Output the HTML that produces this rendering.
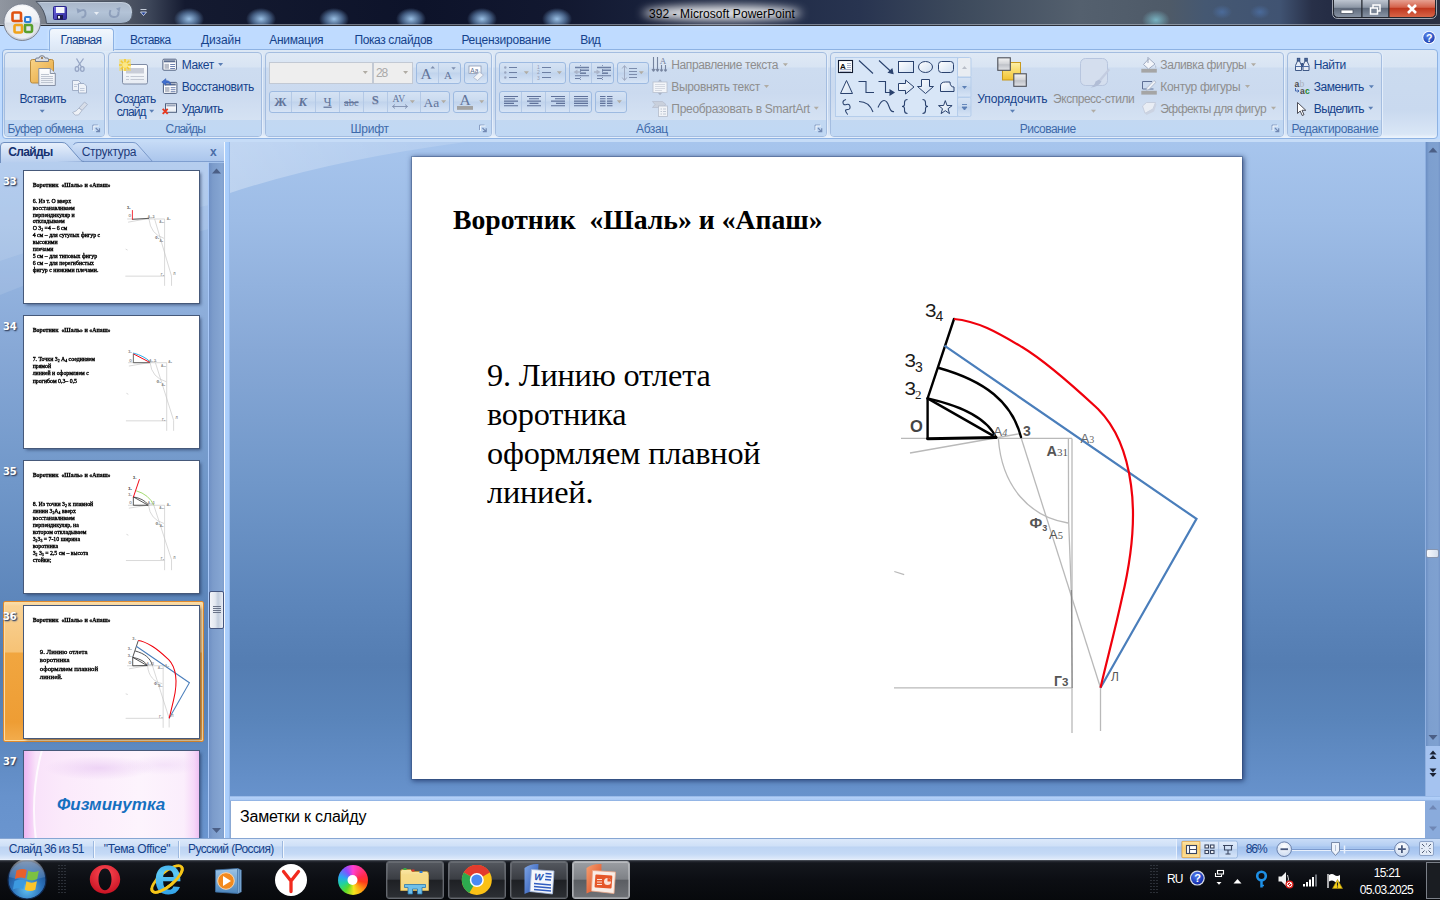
<!DOCTYPE html>
<html lang="ru"><head><meta charset="utf-8"><title>392 - Microsoft PowerPoint</title>
<style>
*{box-sizing:border-box;margin:0;padding:0}
html,body{width:1440px;height:900px;overflow:hidden}
body{position:relative;font-family:"Liberation Sans",sans-serif;font-size:12px;color:#15428b;background:#6b93c9}
.a{position:absolute}
.t{position:absolute;white-space:nowrap;line-height:14px}
#titlebar{left:0;top:0;width:1440px;height:26px;box-shadow:inset 0 -1px 0 #2c303a,inset 0 -2px 0 rgba(190,196,206,.55);background:radial-gradient(ellipse 15px 11px at 189px 19px,rgba(160,200,238,.95),rgba(120,165,215,.5) 60%,rgba(100,140,190,0) 100%),radial-gradient(ellipse 15px 11px at 261px 19px,rgba(160,200,238,.95),rgba(120,165,215,.5) 60%,rgba(100,140,190,0) 100%),radial-gradient(ellipse 15px 11px at 334px 19px,rgba(160,200,238,.95),rgba(120,165,215,.5) 60%,rgba(100,140,190,0) 100%),radial-gradient(ellipse 15px 11px at 411px 19px,rgba(160,200,238,.95),rgba(120,165,215,.5) 60%,rgba(100,140,190,0) 100%),radial-gradient(ellipse 15px 11px at 482px 19px,rgba(160,200,238,.95),rgba(120,165,215,.5) 60%,rgba(100,140,190,0) 100%),radial-gradient(ellipse 15px 11px at 557px 19px,rgba(160,200,238,.95),rgba(120,165,215,.5) 60%,rgba(100,140,190,0) 100%),radial-gradient(ellipse 14px 10px at 1156px 20px,rgba(130,200,215,.8),rgba(100,160,180,0) 100%),radial-gradient(ellipse 10px 7px at 1222px 12px,rgba(80,120,180,.6),rgba(80,120,180,0) 100%),radial-gradient(ellipse 10px 7px at 1260px 12px,rgba(80,120,180,.6),rgba(80,120,180,0) 100%),linear-gradient(90deg,#9096a0 0,#7c828c 40px,#5a606c 110px,#3c4558 150px,#141a30 185px,#0d132a 420px,#121830 560px,#1b2540 700px,#283450 860px,#3d4a5c 960px,#54606e 1080px,#4e5a68 1170px,#455872 1205px,#405372 1280px,#283048 1312px,#222a42 1345px,#2a3042 1440px)}
#tabrow{left:0;top:26px;width:1440px;height:116px;background:#bfdbff}
#ribbon{left:2px;top:49px;width:1436px;height:90px;border:1px solid #8db2e3;border-radius:4px;background:linear-gradient(#dde8f5 0,#d8e4f3 17px,#cbdbef 18px,#c9d9ef 60px,#d9e6f6 84px,#eef5fd 88px)}
.grp{position:absolute;top:52px;height:85px;border:1px solid #a9c2e2;border-radius:4px;background:linear-gradient(#dee8f5 0,#d2e0f2 17px,#c8d8ed 18px,#c9daee 68px,#c2d8f1 69px,#c1d9f3 100%);box-shadow:1px 1px 0 #e8f1fc}
.grp .lbl{position:absolute;left:0;right:0;bottom:0;height:16px;text-align:center;line-height:15px;color:#3e6aaa;font-size:12px}
.dis{color:#8e9aab}
#below{left:0;top:139px;width:1440px;height:3px;background:#c6dcf7}
#leftpane{left:0;top:142px;width:224px;height:696px;background:linear-gradient(#a7c5ed 0,#9dbce6 11%,#87a8d6 30%,#7097c9 49%,#5d86bb 66%,#547db2 75%,#5984ba 83%,#6792cc 94%,#6a95cf 100%)}
#split{left:224px;top:142px;width:6px;height:696px;background:linear-gradient(90deg,#f4f8fe 0,#f4f8fe 1px,#acd0fc 1px,#a8ccfb 5px,#86a8d8 6px)}
#work{left:230px;top:142px;width:1195px;height:654px;background:linear-gradient(#a7c5ed 0,#9dbce6 12%,#87a8d6 32%,#7097c9 52%,#5d86bb 70%,#547db2 80%,#5984ba 88%,#6792cc 100%);overflow:hidden}
#slide{left:412px;top:157px;width:830px;height:622px;background:#fff;box-shadow:1px 1px 5px 1px rgba(25,45,95,.75),0 0 0 1px rgba(60,85,130,.35)}
.grp{position:absolute;top:52px;height:85px;border:1px solid #a4bde0;border-radius:4px;background:linear-gradient(#dfe9f5 0,#d8e4f3 14px,#cddcf0 15px,#cbdaef 40px,#d5e2f3 68px);box-shadow:1px 0 0 #e4eefb,0 1px 0 #e4eefb;overflow:hidden}
.lblband{position:absolute;left:0;right:0;bottom:0;height:16px;background:linear-gradient(#c2d8f2,#c0d8f4)}
#acttab{left:49px;top:28px;width:65px;height:23px;border:1px solid #8db2e3;border-bottom:none;border-radius:4px 4px 0 0;background:linear-gradient(#f2f7fd,#e3edfa 60%,#dbe6f4);box-shadow:0 0 3px #e0f0ff}
#lphead{left:0;top:142px;width:224px;height:20px;background:linear-gradient(#c5daf6,#abc6ec);border-bottom:1px solid #7f9fd0}
.thumb{position:absolute;left:24px;width:175px;height:132px;background:#fff;overflow:hidden;box-shadow:0 0 0 1px #46597a,2px 2px 3px rgba(20,35,70,.55)}
.mini{position:absolute;left:0;top:0;width:830px;height:622px;transform:scale(.2108);transform-origin:0 0;font-family:"Liberation Serif",serif;color:#000}
.mini .ti{-webkit-text-stroke:1.2px #000;position:absolute;left:41px;top:51px;font:bold 27.7px/32px "Liberation Serif",serif;white-space:pre}
.mini .bo{-webkit-text-stroke:1.6px #000;position:absolute;left:41px;font:27.7px/33px "Liberation Serif",serif;white-space:nowrap}
.mini sub{font-size:18px;line-height:0;vertical-align:-5px}
.num{position:absolute;left:3px;width:20px;font:bold 10px/14px "DejaVu Sans","Liberation Sans",sans-serif;letter-spacing:-.15px;color:#fff;text-shadow:1px 1px 1px #3a4966,1px 1px 2px #55688a}
#lpscroll{left:208px;top:163px;width:16px;height:675px;background:linear-gradient(90deg,#a8c8f8 0,#a8c8f8 1px,#6f90c4 1px,#7c9ccb 5px,#86a6d3 14px,#7c9ccc 16px)}
#lpthumb{left:209px;top:591px;width:15px;height:38px;border:1px solid #45567f;border-radius:2px;background:linear-gradient(90deg,#f3f5f9 0,#e3e8f0 40%,#c3cedd 62%,#e9edf4 100%)}
#sel{left:3px;top:601px;width:201px;height:141px;border:1px solid #e18a2b;border-radius:2px;background:linear-gradient(#fbe0b0 0,#f9d295 4px,#f6c275 50px,#f1a640 51px,#ee9d34 120px,#f3ae50 141px);box-shadow:inset 0 0 0 1px #fbdca4}
#nsplit{left:230px;top:796px;width:1210px;height:5px;background:linear-gradient(#8fb1e2,#b1cff8 30%,#a9c9f5 80%,#7fa2d6)}
#notes{left:230px;top:801px;width:1195px;height:37px;background:#fff;border-left:1px solid #8ba9d4}
#nscroll{left:1425px;top:801px;width:15px;height:37px;background:#8aabdc}
#status{left:0;top:838px;width:1440px;height:22px;border-top:1px solid #86a6d3;background:linear-gradient(#dce9fa 0,#cfe0f7 7px,#bdd4f3 8px,#c5daf6 15px,#dde9fa 20px,#eef4fc 21px)}
#statusr{left:1176px;top:839px;width:264px;height:21px;background:linear-gradient(#c9dcf7 0,#b4cef2 7px,#a3c2ee 8px,#b0cbf2 15px,#cfe0f8 20px,#e6effb 21px);border-left:1px solid #e8f0fc}
.ssep{position:absolute;top:841px;width:2px;height:17px;background:linear-gradient(90deg,#9db9e0 50%,#f2f7fd 50%)}
#taskbar{left:0;top:860px;width:1440px;height:40px;background:linear-gradient(#5d636c 0,#2a2e36 1px,#14171d 3px,#0c0e13 20px,#07090c 100%)}
.tbtn{position:absolute;top:861px;height:38px;border:1px solid #63676e;border-radius:3px;background:linear-gradient(#54585f 0,#3a3d43 48%,#1e2024 50%,#2c2f34 100%);box-shadow:inset 0 0 0 1px rgba(255,255,255,.12)}
.tbtn.act{border-color:#a8abb0;background:linear-gradient(#9b9ea3 0,#7e8186 48%,#5a5d62 50%,#6f7277 100%);box-shadow:inset 0 0 0 1px rgba(255,255,255,.3)}
#rainbow{left:337.5px;top:865px;width:30px;height:30px;border-radius:50%;background:conic-gradient(from 0deg,#ff3fd0,#ff2a4a 70deg,#ff3a1a 100deg,#ffa014 140deg,#f6e51c 175deg,#58da2a 215deg,#1fd2a0 250deg,#2aa6f4 285deg,#8a4cff 325deg,#ff3fd0 360deg);filter:blur(.4px)}
</style></head><body>
<div id="titlebar" class="a"></div>
<div id="tabrow" class="a"></div>
<div id="ribbon" class="a"></div>
<div id="below" class="a"></div>
<div id="leftpane" class="a"><svg id="lphl" width="209" height="160" viewBox="0 162 209 160" style="position:absolute;left:0;top:20px"><path d="M0 162H209V205Q90 230 0 261Z" fill="#fff" opacity=".1"/><path d="M0 162H209V229Q90 258 0 295Z" fill="#fff" opacity=".1"/></svg></div>
<div id="split" class="a"></div>
<div id="work" class="a"><svg width="1195" height="654" viewBox="230 142 1195 654" style="position:absolute;left:0;top:0"><defs><linearGradient id="hlg" x1="0" y1="0" x2="1" y2="0"><stop offset="0" stop-color="#fff" stop-opacity=".3"/><stop offset="1" stop-color="#fff" stop-opacity=".12"/></linearGradient></defs><path id="hl" d="M230 142H466Q330 160 230 193Z" fill="url(#hlg)"/></svg></div>
<div class="grp" style="left:4px;width:101px"><div class="lblband"></div></div><div class="grp" style="left:108px;width:154px"><div class="lblband"></div></div><div class="grp" style="left:265px;width:227px"><div class="lblband"></div></div><div class="grp" style="left:495px;width:332px"><div class="lblband"></div></div><div class="grp" style="left:830px;width:454px"><div class="lblband"></div></div><div class="grp" style="left:1287px;width:95px"><div class="lblband"></div></div>
<div id="acttab" class="a"></div>
<svg class="a" style="left:0;top:50px" width="500" height="90" viewBox="0 50 500 90">
<defs>
<linearGradient id="gclip" x1="0" y1="0" x2="1" y2="1"><stop offset="0" stop-color="#f9d488"/><stop offset="1" stop-color="#e5a53c"/></linearGradient>
<linearGradient id="gpaper" x1="0" y1="0" x2="0" y2="1"><stop offset="0" stop-color="#fff"/><stop offset="1" stop-color="#e6ebf3"/></linearGradient>
<linearGradient id="gbtn" x1="0" y1="0" x2="0" y2="1"><stop offset="0" stop-color="#d6e3f4"/><stop offset=".45" stop-color="#c9daef"/><stop offset=".5" stop-color="#c0d3ec"/><stop offset="1" stop-color="#d8e5f6"/></linearGradient>
</defs>
<!-- paste -->
<rect x="30.5" y="59.5" width="23" height="23.5" rx="2" fill="url(#gclip)" stroke="#b98b3e"/>
<path d="M35.5 61.5h13v-2.2q0-1.3-1.5-1.3h-2q-.3-2.3-3-2.300t-3 2.300h-2q-1.500 0-1.500 1.300z" fill="#d9dce3" stroke="#6c7484" stroke-width=".9"/>
<circle cx="42" cy="58" r="1" fill="#8d6a35"/>
<path d="M38.800 68.500h11.500l5 5v12h-16.500z" fill="url(#gpaper)" stroke="#7d889d" stroke-width=".9"/>
<path d="M50.300 68.500v5h5" fill="#dfe5ee" stroke="#7d889d" stroke-width=".9"/>
<path d="M41 74.500h8M41 76.500h12M41 78.500h12M41 80.500h12M41 82.500h12" stroke="#b9c0cc" stroke-width=".9"/>
<!-- scissors -->
<g stroke="#96a5c4" fill="none" stroke-width="1.300"><path d="M76.500 58.500L81.500 67M83.500 58.500L77.500 67"/><ellipse cx="77" cy="69" rx="1.800" ry="2.300"/><ellipse cx="82.300" cy="69" rx="1.800" ry="2.300"/></g>
<!-- copy -->
<g fill="#eef2f8" stroke="#9aa8c2" stroke-width=".9"><path d="M72.500 80.500h6l2.500 2.500v7.500h-8.500z"/><path d="M78.500 83.500h5.500l2.500 2.500v7h-8z"/></g>
<path d="M74 84.500h4M74 86.500h3M80 88.500h4.500M80 90.500h4.500" stroke="#b5bfd2" stroke-width=".8"/>
<!-- brush -->
<g stroke="#a3aec4" stroke-width=".8"><path d="M84.500 102l3 2.500-5.500 6-3-2.500z" fill="#d7dde8"/><path d="M79 108l3 2.500-3.500 4.500q-3.500 1.500-6-2.500q4-1 6.500-4.500z" fill="#eef1f6"/></g>
<!-- new slide -->
<rect x="122.500" y="64.500" width="25" height="19.500" rx="1.500" fill="url(#gpaper)" stroke="#7f8ca5"/>
<rect x="126" y="68" width="18" height="5.500" fill="#c9cdd8"/>
<path d="M126 76.500h3M130.500 76.500h13.500M126 79.500h3M130.500 79.500h13.500" stroke="#c3c8d3" stroke-width="1"/>
<g stroke="#f3c01b" stroke-width="1.600"><path d="M125 59v12M119 65h12M120.800 60.800l8.400 8.400M129.200 60.800l-8.400 8.400"/></g>
<circle cx="125" cy="65" r="2.800" fill="#fff6b8"/><rect x="119" y="59" width="12" height="12" fill="#f8d648" opacity=".45"/>
<!-- layout -->
<g><rect x="162.900" y="59.200" width="13.500" height="11" rx="1" fill="#fff" stroke="#4e5f7e"/><rect x="164" y="60.300" width="11.300" height="2" fill="#5b6d8f"/><rect x="164.500" y="63.800" width="4.500" height="5" fill="#b9bec9"/><path d="M170.200 64.500h4.800M170.200 66.500h4.800M170.200 68.500h4.800" stroke="#5e74a6" stroke-width=".9"/></g>
<!-- reset -->
<g transform="translate(0.500 23.200)"><rect x="162.900" y="59.200" width="13.500" height="11" rx="1" fill="#fff" stroke="#4e5f7e"/><rect x="164" y="60.300" width="11.300" height="2" fill="#5b6d8f"/><rect x="164.500" y="63.800" width="4.500" height="5" fill="#b9bec9"/><path d="M170.200 64.500h4.800M170.200 66.500h4.800M170.200 68.500h4.800" stroke="#5e74a6" stroke-width=".9"/></g>
<path d="M161.800 82l4-3.300v2q4.500-.3 5 4q-2-2.300-5-1.800v2.300z" fill="#3f6fd0" stroke="#2c55ad" stroke-width=".6"/>
<!-- delete -->
<rect x="165.500" y="103.800" width="11" height="8.500" fill="url(#gpaper)" stroke="#4e5f7e"/><rect x="166.500" y="104.800" width="9" height="1.600" fill="#9aa6bd"/>
<path d="M162.700 108.800l5 5M167.700 108.800l-5 5" stroke="#e8381f" stroke-width="1.900"/>
<!-- font combos -->
<rect x="269.500" y="62.500" width="103" height="21" fill="#eee" stroke="#c2c9d4"/><rect x="373.500" y="62.500" width="39" height="21" fill="#eee" stroke="#c2c9d4"/>
<!-- button strips -->
<g fill="url(#gbtn)" stroke="#9dbae1"><rect x="416.500" y="62.500" width="44" height="21" rx="2.500"/><rect x="464.500" y="62.500" width="23" height="21" rx="2.500"/><rect x="269.500" y="91.500" width="180" height="21" rx="2.500"/><rect x="453.500" y="91.500" width="34" height="21" rx="2.500"/></g>
<path d="M438.500 63v20M291.500 92v20M315.500 92v20M339.500 92v20M363.500 92v20M387.500 92v20M420.500 92v20" stroke="#b4c9e6"/>
<g font-family="'Liberation Serif',serif" fill="#62749a">
<text x="274.300" y="105.600" font-size="12.500" font-weight="bold">Ж</text>
<text x="298.500" y="105.600" font-size="12.500" font-weight="bold" font-style="italic">К</text>
<text x="323.500" y="105.600" font-size="12.500" text-decoration="underline">Ч</text>
<text x="344" y="105.600" font-size="10.500" text-decoration="line-through">abc</text>
<text x="372.300" y="105" font-size="12.500" font-weight="bold" fill="#b0bbd0">S</text><text x="371.700" y="104.400" font-size="12.500" font-weight="bold">S</text>
<text x="392.500" y="101.800" font-size="9.500">AV</text>
<text x="423.500" y="106.500" font-size="13.500">Aa</text>
<text x="420.500" y="79" font-size="15.500">A</text><text x="444" y="79" font-size="11">A</text>
<text x="459.500" y="105" font-size="15.500">A</text>
</g>
<path d="M392.500 106.500h15M392.500 106.500l2.500-2M392.500 106.500l2.500 2M407.500 106.500l-2.500-2M407.500 106.500l-2.500 2" stroke="#7f8fae" stroke-width=".9" fill="none"/>
<path d="M430.500 68.500h4.500l-2.250-2.500zM451.300 67.300h4.500l-2.250 2.500z" fill="#7f8fae"/>
<rect x="457" y="106" width="16" height="3.800" fill="#a2a2a2"/>
<!-- clear formatting -->
<rect x="469" y="66" width="12" height="7.500" fill="#fff" stroke="#8c99b3" stroke-width=".8"/><text x="470.300" y="72.600" font-size="6.500" font-family="'Liberation Sans',sans-serif" fill="#5e6f90">Aa</text>
<path d="M479.500 72l4 3-6 5.500-4-3z" fill="#f2f4f8" stroke="#aab4c8" stroke-width=".8"/>
</svg>
<svg class="a" style="left:490px;top:50px" width="500" height="90" viewBox="490 50 500 90">
<g fill="url(#gbtn)" stroke="#9dbae1"><rect x="499.500" y="62.500" width="66" height="21" rx="2.500"/><rect x="569.500" y="62.500" width="44" height="21" rx="2.500"/><rect x="617.500" y="62.500" width="31" height="21" rx="2.500"/><rect x="499.500" y="91.500" width="92" height="21" rx="2.500"/><rect x="595.500" y="91.500" width="31" height="21" rx="2.500"/></g>
<path d="M532.500 63v20M591.500 63v20M521.500 92v20M545.500 92v20M569.500 92v20" stroke="#b4c9e6"/>
<!-- bullets -->
<g stroke="#6d7fa3" stroke-width="1.100"><path d="M509 67.500h8M509 72.500h8M509 77.500h8M542 67.500h9M542 72.500h9M542 77.500h9"/></g>
<g fill="#9aa6c0"><circle cx="505.300" cy="67.500" r="1.200"/><circle cx="505.300" cy="72.500" r="1.200"/><circle cx="505.300" cy="77.500" r="1.200"/></g>
<g font-family="'Liberation Sans',sans-serif" font-size="5" fill="#8f9bb5"><text x="537" y="69.300">1</text><text x="537" y="74.300">2</text><text x="537" y="79.500">3</text></g>
<!-- indent icons -->
<g stroke="#6d7fa3"><path d="M580.500 65v15M602.500 65v15" stroke-dasharray="1 1" stroke-width=".8"/><path d="M575 67.500h14M580 70.300h9" stroke-width="1.600"/><path d="M580 73.200h6" stroke-width="1.600"/><path d="M575 75.800h14M575 78.500h5" stroke-width="1.100"/><path d="M597 67.500h14M602 70.300h9" stroke-width="1.600"/><path d="M602 73.200h6" stroke-width="1.600"/><path d="M597 75.800h14M597 78.500h5" stroke-width="1.100"/></g>
<path d="M573.500 72l4-2.500v1.700h2.500v1.600h-2.500v1.700z" fill="#aab4c8"/><path d="M600.500 72l-4-2.500v1.700h-2.500v1.600h2.500v1.700z" fill="#aab4c8"/>
<!-- line spacing -->
<g stroke="#7c8cac" stroke-width="1" fill="none"><path d="M624.500 66v14M624.500 65.500l-2.300 3M624.500 65.500l2.300 3M624.500 80.500l-2.300-3M624.500 80.500l2.300-3" stroke="#a0abc2"/><path d="M629 68.500h8M629 71.500h8M629 74.500h8M629 77.500h8" stroke-width="1.100"/></g>
<!-- align -->
<g stroke="#5e7099" stroke-width="1.100"><path d="M504 96.500h14M504 98.800h11M504 101.100h14M504 103.400h10M504 105.700h14"/><path d="M527 96.500h14M529 98.800h10M527 101.100h14M529.500 103.400h9M527 105.700h14"/><path d="M551 96.500h14M555 98.800h10M551 101.100h14M556 103.400h9M551 105.700h14"/><path d="M574 96.500h14M574 98.800h14M574 101.100h14M574 103.400h14M574 105.700h14"/><path d="M600 96.500h5.500M607 96.500h5.500M600 98.800h5.500M607 98.800h5.500M600 101.100h5.500M607 101.100h5.500M600 103.400h5.500M607 103.400h5.500M600 105.700h5.500M607 105.700h5.500"/></g>
<!-- text direction -->
<g stroke="#76849f" stroke-width="1.100" fill="none"><path d="M653.500 57v14M657.500 57v14M653.500 71.500l-1.500-2.500M653.500 71.500l1.500-2.500M657.500 71.500l-1.500-2.500M657.500 71.500l1.500-2.500M661.500 65v6.500M665.500 65v6.500M661.500 71.500l-1.300-2M661.500 71.500l1.300-2M665.500 71.500l-1.300-2M665.500 71.500l1.300-2"/></g>
<text x="659.800" y="64" font-family="'Liberation Serif',serif" font-size="9" fill="#76849f">A</text>
<!-- align text -->
<rect x="653" y="82" width="14" height="10.500" fill="#f3f5f9" stroke="#b7bfce" stroke-width=".8"/><path d="M655 84.500h10M655 86.500h10M655 88.500h10M655 90.500h7" stroke="#c5cbd7" stroke-width=".7"/><path d="M660 79.200l2 2.300h-4zM660 95.300l2-2.300h-4z" fill="#a9b3c6"/>
<!-- smartart -->
<path d="M652.500 101.500h10l3.500 3-3.500 3h-10l2.500-3z" fill="#c9d0dc" stroke="#b4bccb" stroke-width=".7"/><rect x="658.500" y="106" width="9" height="10.500" fill="#f1f3f7" stroke="#b4bccb" stroke-width=".8"/><path d="M660.500 109h1.500M663 109h3M660.500 111.500h1.500M663 111.500h3M660.500 114h1.500M663 114h3" stroke="#b4bccb" stroke-width=".8"/>
<!-- shapes gallery -->
<rect x="835.500" y="57.500" width="122" height="59" fill="#d8e6f7" stroke="#b5cdeb"/>
<g stroke="#b5cdeb"><rect x="957.500" y="57.500" width="13.500" height="19.500" rx="1.500" fill="#e9edf2"/><rect x="957.500" y="77.500" width="13.500" height="19.500" fill="url(#gbtn)"/><rect x="957.500" y="97.500" width="13.500" height="19" rx="1.500" fill="url(#gbtn)"/></g>
<path d="M962 69h5l-2.500-3z" fill="#b9bec8"/><path d="M962 86h5l-2.500 3z" fill="#5b7fb5"/><path d="M962 107h5l-2.500 3zM962 104.500h5" fill="#5b7fb5" stroke="#5b7fb5" stroke-width=".9"/>
<defs><linearGradient id="gsh" x1="0" y1="0" x2="1" y2="1"><stop offset="0" stop-color="#fff"/><stop offset="1" stop-color="#cfdff2"/></linearGradient></defs>
<g fill="url(#gsh)" stroke="#2a426e" stroke-width="1">
<rect x="838.500" y="60.500" width="14" height="12" stroke="#111a30" stroke-width="1.100" fill="#fff"/>
<rect x="898.500" y="61.500" width="15" height="11"/><ellipse cx="925.500" cy="67" rx="7" ry="5.500"/><rect x="938.500" y="61.500" width="15" height="11" rx="3"/>
<path d="M846.500 80.500l6 13h-12z"/>
<path d="M898.500 83.500h7v-3.500l8.500 7-8.500 7v-3.500h-7z"/><path d="M921.500 79.500h8v7h4l-8 7-8-7h4z"/>
<path d="M940.500 86q0-4 5-4h4.500q0 5 4 5v4.500h-13.500z"/>
<path d="M945.3 100.6L947.0 105.5L952.1 105.6L948.1 108.7L949.5 113.6L945.3 110.7L941.1 113.6L942.5 108.7L938.5 105.6L943.6 105.5z"/>
</g>
<g fill="none" stroke="#2a426e" stroke-width="1.100">
<path d="M859 60.500l14 13M879 60.500l13 12"/><path d="M893 73.500l-1-4.500-3.500 3.500z" fill="#2a426e"/>
<path d="M858.500 81.500h7.500v11h8"/><path d="M878.500 81.500h7v11h7"/><path d="M894 92.500l-4-2.500v5z" fill="#2a426e"/>
<path d="M846 99.500q-3.500 1-3 3.500t3.500 1.500 3.500 2-2.500 3-1.500 2.500 2 2.500"/>
<path d="M859 101.500q10 0 14 10.500"/><path d="M878 107.500q3-7 6-7t5 6 5 5"/>
<path d="M907.500 99.500q-3 0-3 3v2q0 2-2.500 2 2.500 0 2.500 2v2q0 3 3 3M922.500 99.500q3 0 3 3v2q0 2 2.500 2-2.500 0-2.500 2v2q0 3-3 3"/>
</g>
<text x="840" y="68.500" font-family="'Liberation Sans',sans-serif" font-weight="bold" font-size="8" fill="#111">A</text><path d="M847 63.500h4M847 65.500h4M847 67.500h4M840 69.500h11M840 71.300h11" stroke="#7f8fb5" stroke-width=".7"/>
</svg>
<svg class="a" style="left:980px;top:26px" width="460" height="114" viewBox="980 26 460 114">
<defs>
<linearGradient id="ggray" x1="0" y1="0" x2="0" y2="1"><stop offset="0" stop-color="#f4f4f4"/><stop offset=".5" stop-color="#d0d2d6"/><stop offset=".55" stop-color="#bfc2c8"/><stop offset="1" stop-color="#e2e4e8"/></linearGradient>
<linearGradient id="gyel" x1="0" y1="0" x2="0" y2="1"><stop offset="0" stop-color="#fdf0a8"/><stop offset=".5" stop-color="#f8db6a"/><stop offset="1" stop-color="#f1c232"/></linearGradient>
<radialGradient id="ghelp" cx=".4" cy=".3" r=".8"><stop offset="0" stop-color="#5d8df0"/><stop offset="1" stop-color="#1534a8"/></radialGradient>
</defs>
<!-- arrange -->
<rect x="1002.500" y="62.500" width="18" height="17.500" fill="url(#gyel)" stroke="#c89a1e"/>
<rect x="997.800" y="57.800" width="12.500" height="12.500" fill="url(#ggray)" stroke="#4c4f57" stroke-width="1.100"/>
<rect x="1013.800" y="73.800" width="12.500" height="12.500" fill="url(#ggray)" stroke="#4c4f57" stroke-width="1.100"/>
<!-- express styles -->
<rect x="1080.500" y="58.500" width="27" height="27" rx="5" fill="#d4deee" stroke="#b7c5de"/>
<path d="M1108.500 68.500l1.500 1.500-9 11-2-1.500z" fill="#c3cce0"/><path d="M1099 79.500l2.500 2q-3 5.500-11 6 4.500-2.500 5-6z" fill="#b1bdd6"/>
<!-- fill -->
<rect x="1141.300" y="68.800" width="15.500" height="3.800" fill="#a5a5a5"/>
<path d="M1149 58.500l6 5.500-6.500 5-5-4.500z" fill="#f4f6fa" stroke="#9aa5bb" stroke-width=".9"/><path d="M1148 57v6" stroke="#9aa5bb"/><path d="M1155.500 64.500q1.500 2.500.3 4-1.300-1.500-.3-4z" fill="#b9c3d6"/>
<!-- outline -->
<rect x="1141.300" y="90.800" width="15.500" height="3.800" fill="#a5a5a5"/>
<path d="M1142.500 81.500h9.500M1142.500 81.500v7.500h11" fill="none" stroke="#5f7096" stroke-width="1"/><path d="M1154 80.500l2 1.700-7 7.300-2.800.8.800-2.600z" fill="#eef1f6" stroke="#a8b2c6" stroke-width=".8"/>
<!-- effects -->
<path d="M1142.500 106l4-3.500h9l-2.500 6.500-8 4.300z" fill="#e9edf4" stroke="#c0c8d8" stroke-width=".8"/><path d="M1145 113.300l8-4.300 2.500-6.500 1 2-2.500 7-7.500 3.500z" fill="#cbd3e2"/>
<!-- binoculars -->
<g stroke="#2f4a7a" stroke-width=".9"><path d="M1295.500 70.500v-5l2-4.500h2l2 4.500v5z" fill="#e6ecf6"/><path d="M1303 70.500v-5l2-4.500h2l2 4.500v5z" fill="#e6ecf6"/><rect x="1297.300" y="58.300" width="2.500" height="2.500" fill="#4f6ea6"/><rect x="1304.800" y="58.300" width="2.500" height="2.500" fill="#4f6ea6"/><path d="M1301.500 63.500h1.500v3h-1.500z" fill="#4f6ea6"/></g>
<path d="M1295.500 66.500h6M1303 66.500h6" stroke="#4f6ea6" stroke-width="1.200"/>
<!-- replace -->
<g font-family="'Liberation Sans',sans-serif" font-weight="bold" font-size="8.500"><text x="1294.500" y="86.500" fill="#4a4a4a">a</text><text x="1299.500" y="86.500" fill="#aab0bb" font-family="'Liberation Serif',serif" font-weight="normal" font-size="9.500">b</text><text x="1300" y="93.500" fill="#4a4a4a">a</text><text x="1305" y="93.500" fill="#1f8a2a">c</text></g>
<path d="M1295.500 88v3h3.500M1299 91l-1.500-1.300M1299 91l-1.500 1.300" stroke="#3a5fa8" stroke-width=".9" fill="none"/>
<!-- cursor -->
<path d="M1297.500 102.500v11l2.700-2.500 2 4.500 1.800-.8-2-4.400h3.800z" fill="#fff" stroke="#3c3c46" stroke-width=".9"/>
<!-- help -->
<circle cx="1429" cy="37.500" r="6.600" fill="#fff"/><circle cx="1429" cy="37.500" r="5.700" fill="url(#ghelp)"/>
<text x="1426" y="41.500" font-family="'Liberation Sans',sans-serif" font-weight="bold" font-size="10.500" fill="#fff">?</text>
</svg>
<div class="t" style="left:60.4px;top:33.0px;line-height:14px;letter-spacing:-0.66px;">Главная</div>
<div class="t" style="left:130.0px;top:33.0px;line-height:14px;letter-spacing:-0.56px;">Вставка</div>
<div class="t" style="left:201.0px;top:33.0px;line-height:14px;letter-spacing:-0.11px;">Дизайн</div>
<div class="t" style="left:269.2px;top:33.0px;line-height:14px;letter-spacing:-0.28px;">Анимация</div>
<div class="t" style="left:354.4px;top:33.0px;line-height:14px;letter-spacing:-0.37px;">Показ слайдов</div>
<div class="t" style="left:461.4px;top:33.0px;line-height:14px;letter-spacing:-0.25px;">Рецензирование</div>
<div class="t" style="left:580.3px;top:33.0px;line-height:14px;letter-spacing:-0.57px;">Вид</div>
<div class="t" style="left:7.6px;top:122.3px;line-height:14px;letter-spacing:-0.50px;color:#3e6aaa;">Буфер обмена</div>
<div class="t" style="left:165.6px;top:122.3px;line-height:14px;letter-spacing:-0.88px;color:#3e6aaa;">Слайды</div>
<div class="t" style="left:350.6px;top:122.3px;line-height:14px;letter-spacing:-0.24px;color:#3e6aaa;">Шрифт</div>
<div class="t" style="left:636.0px;top:122.3px;line-height:14px;letter-spacing:-0.37px;color:#3e6aaa;">Абзац</div>
<div class="t" style="left:1019.8px;top:122.3px;line-height:14px;letter-spacing:-0.52px;color:#3e6aaa;">Рисование</div>
<div class="t" style="left:1291.5px;top:122.3px;line-height:14px;letter-spacing:-0.33px;color:#3e6aaa;">Редактирование</div>
<div class="t" style="left:19.4px;top:91.9px;line-height:14px;letter-spacing:-0.52px;">Вставить</div>
<div class="t" style="left:114.4px;top:91.9px;line-height:14px;letter-spacing:-0.63px;">Создать</div>
<div class="t" style="left:116.7px;top:105.1px;line-height:14px;letter-spacing:-0.90px;">слайд</div>
<div class="t" style="left:181.7px;top:58.1px;line-height:14px;letter-spacing:-0.35px;">Макет</div>
<div class="t" style="left:181.7px;top:80.2px;line-height:14px;letter-spacing:-0.39px;">Восстановить</div>
<div class="t" style="left:181.7px;top:102.3px;line-height:14px;letter-spacing:-0.68px;">Удалить</div>
<div class="t" style="left:376.1px;top:66.2px;line-height:14px;letter-spacing:-1.38px;color:#a9a9a9;">28</div>
<div class="t" style="left:671.3px;top:58.2px;line-height:14px;letter-spacing:-0.39px;color:#8e8e8e;">Направление текста</div>
<div class="t" style="left:671.3px;top:80.2px;line-height:14px;letter-spacing:-0.33px;color:#8e8e8e;">Выровнять текст</div>
<div class="t" style="left:671.3px;top:102.1px;line-height:14px;letter-spacing:-0.29px;color:#8e8e8e;">Преобразовать в SmartArt</div>
<div class="t" style="left:977.3px;top:92.0px;line-height:14px;letter-spacing:-0.11px;">Упорядочить</div>
<div class="t" style="left:1053.1px;top:92.0px;line-height:14px;letter-spacing:-0.48px;color:#8e8e8e;">Экспресс-стили</div>
<div class="t" style="left:1160.3px;top:58.2px;line-height:14px;letter-spacing:-0.40px;color:#8e8e8e;">Заливка фигуры</div>
<div class="t" style="left:1160.3px;top:80.2px;line-height:14px;letter-spacing:-0.30px;color:#8e8e8e;">Контур фигуры</div>
<div class="t" style="left:1160.3px;top:102.1px;line-height:14px;letter-spacing:-0.56px;color:#8e8e8e;">Эффекты для фигур</div>
<div class="t" style="left:1313.8px;top:58.2px;line-height:14px;letter-spacing:-0.47px;">Найти</div>
<div class="t" style="left:1313.8px;top:80.2px;line-height:14px;letter-spacing:-0.49px;">Заменить</div>
<div class="t" style="left:1313.8px;top:102.1px;line-height:14px;letter-spacing:-0.67px;">Выделить</div>
<svg class="a" style="left:0;top:0;pointer-events:none" width="1440" height="140" viewBox="0 0 1440 140"><path d="M39.7 109.7h5l-2.5 3z" fill="#5b7fb5"/><path d="M149.2 109.7h5l-2.5 3z" fill="#5b7fb5"/><path d="M218.1 62.900000000000006h5l-2.5 3z" fill="#5b7fb5"/><path d="M1010.0 109.8h5l-2.5 3z" fill="#5b7fb5"/><path d="M1368.9 85.2h5l-2.5 3z" fill="#5b7fb5"/><path d="M1368.2 106.8h5l-2.5 3z" fill="#5b7fb5"/><path d="M782.9 63.3h5l-2.5 3z" fill="#b0aca4"/><path d="M764.0 85.1h5l-2.5 3z" fill="#b0aca4"/><path d="M813.8 106.7h5l-2.5 3z" fill="#b0aca4"/><path d="M1091.0 109.8h5l-2.5 3z" fill="#b0aca4"/><path d="M1251.0 63.3h5l-2.5 3z" fill="#b0aca4"/><path d="M1245.0 85.1h5l-2.5 3z" fill="#b0aca4"/><path d="M1271.0 106.7h5l-2.5 3z" fill="#b0aca4"/><path d="M362.8 71.1h5l-2.5 3z" fill="#b0aca4"/><path d="M403.1 71.1h5l-2.5 3z" fill="#b0aca4"/><path d="M409.9 100.3h5l-2.5 3z" fill="#b0aca4"/><path d="M441.1 100.3h5l-2.5 3z" fill="#b0aca4"/><path d="M479.2 100.3h5l-2.5 3z" fill="#b0aca4"/><path d="M523.9 71.3h5l-2.5 3z" fill="#b0aca4"/><path d="M556.9 71.3h5l-2.5 3z" fill="#b0aca4"/><path d="M638.8 71.3h5l-2.5 3z" fill="#b0aca4"/><path d="M616.9 100.3h5l-2.5 3z" fill="#b0aca4"/><g transform="translate(92.3 124.5)" fill="none"><path d="M.5 5.5V.5H5.5" stroke="#8aa0c4"/><path d="M1.5 6.5V1.5H6.5" stroke="#fff" opacity=".8"/><path d="M3.5 3.5L6.8 6.8M7.2 3.8V7.2H3.8" stroke="#7289b3" stroke-width="1.2"/></g><g transform="translate(479 124.5)" fill="none"><path d="M.5 5.5V.5H5.5" stroke="#8aa0c4"/><path d="M1.5 6.5V1.5H6.5" stroke="#fff" opacity=".8"/><path d="M3.5 3.5L6.8 6.8M7.2 3.8V7.2H3.8" stroke="#7289b3" stroke-width="1.2"/></g><g transform="translate(814.5 124.5)" fill="none"><path d="M.5 5.5V.5H5.5" stroke="#8aa0c4"/><path d="M1.5 6.5V1.5H6.5" stroke="#fff" opacity=".8"/><path d="M3.5 3.5L6.8 6.8M7.2 3.8V7.2H3.8" stroke="#7289b3" stroke-width="1.2"/></g><g transform="translate(1271.5 124.5)" fill="none"><path d="M.5 5.5V.5H5.5" stroke="#8aa0c4"/><path d="M1.5 6.5V1.5H6.5" stroke="#fff" opacity=".8"/><path d="M3.5 3.5L6.8 6.8M7.2 3.8V7.2H3.8" stroke="#7289b3" stroke-width="1.2"/></g></svg>
<svg class="a" style="left:0;top:0" width="1440" height="50" viewBox="0 0 1440 50">
<defs>
<linearGradient id="gqat" x1="0" y1="0" x2="0" y2="1"><stop offset="0" stop-color="#a9b6c8"/><stop offset=".5" stop-color="#b3c3d7"/><stop offset="1" stop-color="#9fb0c6"/></linearGradient>
<radialGradient id="gorb" cx=".5" cy=".35" r=".75"><stop offset="0" stop-color="#fff"/><stop offset=".55" stop-color="#eef0f4"/><stop offset=".8" stop-color="#cfd4dd"/><stop offset="1" stop-color="#9aa2b0"/></radialGradient>
<linearGradient id="gorb2" x1="0" y1="0" x2="0" y2="1"><stop offset="0" stop-color="#fff"/><stop offset=".5" stop-color="#e8ebf0"/><stop offset=".52" stop-color="#d2d7e0"/><stop offset="1" stop-color="#f6f7fa"/></linearGradient>
<linearGradient id="gsave" x1="0" y1="0" x2="1" y2="1"><stop offset="0" stop-color="#6f66e0"/><stop offset="1" stop-color="#2e2a9a"/></linearGradient>
<linearGradient id="gclose" x1="0" y1="0" x2="0" y2="1"><stop offset="0" stop-color="#e9a99b"/><stop offset=".45" stop-color="#d4614a"/><stop offset=".5" stop-color="#c0361d"/><stop offset="1" stop-color="#d9684a"/></linearGradient>
<linearGradient id="gwb" x1="0" y1="0" x2="0" y2="1"><stop offset="0" stop-color="#c5ccd6"/><stop offset=".45" stop-color="#8d97a6"/><stop offset=".5" stop-color="#5f6a7b"/><stop offset="1" stop-color="#8a95a6"/></linearGradient>
<filter id="glow" x="-20%" y="-100%" width="140%" height="300%"><feGaussianBlur stdDeviation="5"/></filter>
</defs>
<!-- QAT pill -->
<path d="M36 1.500H121q11.500 0 11.500 11t-11.500 11H46.500q-1-14-10.500-22z" fill="url(#gqat)" stroke="#4b5462" stroke-width="1"/>
<path d="M40 2.500H121q10.500 0 10.500 10" fill="none" stroke="#d5deea" stroke-width=".8" opacity=".7"/>
<!-- save -->
<rect x="53.500" y="6.500" width="13" height="13" rx="1" fill="url(#gsave)" stroke="#29258a"/>
<rect x="56" y="7" width="8.500" height="6" fill="#f4f6fb"/><rect x="57" y="15" width="6" height="4.500" fill="#1c1a4a"/><rect x="58" y="16" width="2" height="2.500" fill="#e8ebf4"/>
<!-- undo/redo -->
<g fill="none" stroke="#8e9fbb" stroke-width="2"><path d="M79 11.500q6-3.500 6.500 1t-4 5"/><path d="M110.500 10q-2.500 6.500 3 7t5-5.500"/></g>
<path d="M76.500 8l1 5.500 4.500-3z" fill="#8e9fbb"/><path d="M120.500 7l-4.500 1.500 3.500 3.500z" fill="#8e9fbb"/>
<path d="M94 12h5l-2.500 3z" fill="#e8edf4"/>
<!-- customize -->
<path d="M140.500 9.500h6M140.500 12h6l-3 3.500z" fill="#1d3c92" stroke="#e5ecf8" stroke-width=".8"/>
<!-- orb -->
<circle cx="22.200" cy="22.200" r="18.300" fill="url(#gorb)" stroke="#7d8492" stroke-width="1"/>
<circle cx="22.200" cy="22.200" r="16.300" fill="url(#gorb2)" opacity=".75"/>
<g fill="none" stroke-width="2.600" stroke-linejoin="round"><rect x="12.500" y="12.500" width="8.500" height="8.500" rx="1.500" stroke="#e0520f"/><rect x="25" y="17" width="5.500" height="5" rx="1" stroke="#2f7fd6" stroke-width="2"/><rect x="14.500" y="25" width="7.500" height="7.500" rx="1.500" stroke="#f0a31a"/><rect x="25" y="25" width="7" height="7" rx="1.500" stroke="#5aa02c"/></g>
<g><circle cx="21.500" cy="21" r="1.300" fill="#e0520f"/><circle cx="25" cy="21" r="1.200" fill="#2f7fd6"/><circle cx="21.500" cy="25" r="1.200" fill="#f0a31a"/><circle cx="25" cy="25" r="1.200" fill="#5aa02c"/></g>
<!-- title glow + window buttons -->
<ellipse cx="722" cy="13" rx="80" ry="7.5" fill="#fff" opacity=".9" filter="url(#glow)"/>
<path d="M1332.500 0v13q0 5.500 5.500 5.500h93q5.500 0 5.500-5.500V0" fill="none" stroke="#c9ced6" stroke-width="1" opacity=".75"/><g stroke="#22262f" stroke-width="1"><path d="M1333.500 -1v13.500q0 5 5 5h23.500V-1z" fill="url(#gwb)"/><rect x="1362" y="-1" width="27" height="18.500" fill="url(#gwb)"/><path d="M1389 -1v18.500h41.500q5 0 5-5V-1z" fill="url(#gclose)"/></g>
<rect x="1341" y="10" width="12" height="3.500" fill="#fff" stroke="#4a5260" stroke-width=".8"/>
<g fill="none" stroke="#fff" stroke-width="1.500"><rect x="1373" y="5" width="7" height="6"/><rect x="1370.500" y="8" width="7" height="6" fill="#7a8596"/></g>
<path d="M1408 5l8 8M1416 5l-8 8" stroke="#fff" stroke-width="2.600"/>
</svg>
<div class="t" style="left:649px;top:6.500px;color:#000;font-size:12px;letter-spacing:.07px">392 - Microsoft PowerPoint</div>
<div id="lphead" class="a"></div>
<svg class="a" style="left:0;top:141px" width="224" height="22" viewBox="0 0 224 22">
<defs><linearGradient id="tg" x1="0" y1="0" x2="0" y2="1"><stop offset="0" stop-color="#e9f1fc"/><stop offset="1" stop-color="#b6cdee"/></linearGradient>
<linearGradient id="tg2" x1="0" y1="0" x2="0" y2="1"><stop offset="0" stop-color="#d3e3f8"/><stop offset="1" stop-color="#a5c0ea"/></linearGradient></defs>
<path d="M68 20.500H152.500L137 3Q135.500 1.500 133 1.500H78Q74 1.500 73.500 4" fill="url(#tg2)" stroke="#7b9acb" stroke-width="1"/>
<path d="M0.500 22V5Q0.500 1.500 4 1.500H62Q65 1.500 66.500 3L81 19.500Q82 20.500 84 20.500" fill="url(#tg)" stroke="#6f8fc0" stroke-width="1"/>
</svg>
<div class="t" style="left:8.3px;top:144.8px;line-height:14px;font:bold 12px 'Liberation Sans';line-height:14px;letter-spacing:-0.67px;color:#15306f;">Слайды</div>
<div class="t" style="left:81.7px;top:144.8px;line-height:14px;letter-spacing:-0.26px;color:#1c3a7a;">Структура</div>
<div class="t" style="left:210px;top:144.500px;font:bold 12px/14px 'Liberation Sans',sans-serif;color:#4a6da8">x</div>
<div id="lpscroll" class="a"></div>
<svg class="a" style="left:209px;top:163px" width="15" height="675" viewBox="0 0 15 675"><path d="M3 10.5L7.5 5.5L12 10.5Z" fill="#4b5f86"/><path d="M3 665L7.5 670L12 665Z" fill="#4b5f86"/></svg>
<div id="lpthumb" class="a"></div>
<svg class="a" style="left:213px;top:606px" width="9" height="9" viewBox="0 0 9 9"><path d="M0 .5H8M0 2.500H8M0 4.500H8M0 6.500H8" stroke="#6b7488" stroke-width="1"/></svg>
<div id="sel" class="a"></div>

<div class="num" style="top:174.5px">33</div>
<div class="thumb" style="top:171px"><div class="mini"><div class="ti">Воротник  «Шаль» и «Апаш»</div>
<div class="bo" style="top:124px">6. Из т. О вверх<br>восстанавливаем<br>перпендикуляр и<br>откладываем<br>О З<sub>2</sub> =4 – 6 см<br>4 см – для сутулых фигур с<br>высокими<br>плечами<br>5 см – для типовых фигур<br>6 см – для перегибистых<br>фигур с  низкими плечами.</div></div></div>

<div class="num" style="top:319.5px">34</div>
<div class="thumb" style="top:316px"><div class="mini"><div class="ti">Воротник  «Шаль» и «Апаш»</div>
<div class="bo" style="top:188px;line-height:34px">7. Точки З<sub>2</sub> А<sub>4</sub> соединяем<br>прямой<br>линией и оформляем с<br>прогибом 0,3– 0,5</div></div></div>

<div class="num" style="top:464.5px">35</div>
<div class="thumb" style="top:461px"><div class="mini"><div class="ti">Воротник  «Шаль» и «Апаш»</div>
<div class="bo" style="top:188px">8. Из точки З<sub>2</sub> к плавной<br>линии З<sub>2</sub>А<sub>4</sub> вверх<br>восстанавливаем<br>перпендикуляр, на<br>котором откладываем<br>З<sub>2</sub>З<sub>3</sub> = 7-10 ширина<br>воротника<br>З<sub>2</sub> З<sub>3</sub> = 2,5 см – высота<br>стойки;</div></div></div>

<div class="num" style="top:609.5px">36</div>
<div class="thumb" style="top:606px"><div class="mini"><div class="ti">Воротник  «Шаль» и «Апаш»</div>
<div class="bo" style="left:75px;top:199px;font-size:32.3px;line-height:39px">9. Линию отлета<br>воротника<br>оформляем плавной<br>линией.</div></div></div>

<div class="num" style="top:754.5px">37</div>
<div class="thumb" style="top:751px;height:87px;background:radial-gradient(ellipse 55px 12px at 75px 17px,rgba(226,190,240,.55),rgba(226,190,240,0)),radial-gradient(ellipse 40px 10px at 140px 14px,rgba(232,205,244,.4),rgba(232,205,244,0)),linear-gradient(90deg,#eeb6f2 0,#f4cff6 7px,#f9e3fa 12px,#fbeafb 40px,#fdf4fd 115px,#fbeefc 160px,#f6d8f8 170px,#efc0f3 175px)"><div class="a" style="left:9px;top:-170px;width:458px;height:458px;border-radius:50%;border:2.500px solid rgba(255,255,255,.8);filter:blur(.6px)"></div><div class="t" style="left:33px;top:44px;font:italic bold 17px/20px 'Liberation Sans',sans-serif;color:#1670c0">Физминутка</div></div>
<svg class="a" style="left:0;top:165px" width="225" height="145" viewBox="0 0 1397 900" font-family="'Liberation Sans',sans-serif" font-weight="bold">
<g fill="none" stroke="#c4c4c4" stroke-width="4"><path d="M790 335H1022M795 355L960 325M925 335Q935 430 1018 455M960 335L1065 690M1022 335V750M778 690H1022M1065 690V750M780 522l12 6"/></g>
<path d="M822 337L925 331" stroke="#555" stroke-width="6"/><path d="M822 280V340" stroke="#f0000c" stroke-width="5"/>
<g font-size="20" fill="#333"><text x="788" y="270">З₂</text><text x="798" y="325" fill="#777">О</text><text x="918" y="328" fill="#888">А₄ З</text><text x="1035" y="340" fill="#888">А₃</text><text x="988" y="360" fill="#888">А₃₁</text><text x="962" y="462" fill="#777">Ф₃</text><text x="990" y="478" fill="#888">А₅</text><text x="998" y="688" fill="#888">Г₃</text><text x="1076" y="680" fill="#888">Л</text></g>
</svg>
<svg class="a" style="left:0;top:310px" width="225" height="145" viewBox="0 0 1397 900" font-family="'Liberation Sans',sans-serif" font-weight="bold">
<g fill="none" stroke="#c4c4c4" stroke-width="4"><path d="M795 327H1035M800 348L975 318M932 327Q942 420 1032 445M965 327L1078 685M1035 327V750M782 688H1035M1078 685V750M785 517l12 6"/></g>
<path d="M828 270V327H930" fill="none" stroke="#444" stroke-width="5"/><path d="M828 272L930 325" stroke="#f0000c" stroke-width="6"/><path d="M828 267Q895 285 933 322" fill="none" stroke="#2aa9e6" stroke-width="6"/>
<g font-size="20" fill="#777"><text x="796" y="265">З₂</text><text x="803" y="320">О</text><text x="926" y="322" fill="#888">А₄  З</text><text x="1045" y="332" fill="#888">А₃</text><text x="1000" y="352" fill="#888">А₃₁</text><text x="972" y="455">Ф₃</text><text x="1003" y="472" fill="#888">А₅</text><text x="1006" y="686" fill="#888">Г₃</text><text x="1090" y="676" fill="#888">Л</text></g>
</svg>
<svg class="a" style="left:0;top:455px" width="225" height="145" viewBox="0 0 1397 900" font-family="'Liberation Sans',sans-serif" font-weight="bold">
<g fill="none" stroke="#c4c4c4" stroke-width="4"><path d="M795 312H1022M800 330L960 305M922 312Q932 400 1018 425M955 312L1065 650M1022 312V715M782 655H1022M1065 650V715M785 492l12 6"/></g>
<path d="M828 260V312H920L828 260Q890 270 920 308" fill="none" stroke="#333" stroke-width="5"/>
<path d="M845 222Q925 245 955 312" fill="none" stroke="#8ed14f" stroke-width="5"/><path d="M828 262L866 150" stroke="#f0000c" stroke-width="6"/>
<g font-size="20" fill="#777"><text x="826" y="148" fill="#222">З₄</text><text x="796" y="216" fill="#222">З₃</text><text x="796" y="252">З₂</text><text x="803" y="305">О</text><text x="918" y="306" fill="#888">А₄ З</text><text x="1035" y="318" fill="#888">А₃</text><text x="988" y="336" fill="#888">А₃₁</text><text x="965" y="434">Ф₃</text><text x="992" y="450" fill="#888">А₅</text><text x="998" y="653" fill="#888">Г₃</text><text x="1076" y="643" fill="#888">Л</text></g>
</svg>
<svg class="a" style="left:24px;top:606px" width="175" height="132" viewBox="412 157 830 622" font-family="'Liberation Sans',sans-serif">
<g fill="none" stroke="#c2c2c2" stroke-width="3"><path d="M901 438.400H1072M910 453L1021 433.500M998.400 439C1002 487 1030 517 1068 523M1021.500 439L1100.500 687.800M1072 438.400V733M894 687.800H1072M1100.500 687.800V731M894.300 571.500L904.200 574.700"/></g>
<g fill="none" stroke="#333" stroke-width="4"><path d="M954 319L927.600 398.400V438.600L996 437.400L927.600 398.400C952 404 985 414 996 437.400M939 368C985 381 1012 402 1021 437"/></g>
<path d="M944.400 345.600L1196.500 518.900L1100.500 687.800" fill="none" stroke="#4a7ebb" stroke-width="5"/>
<path d="M954 319C978 321 998 333 1022 347C1050 364 1085 397 1098 409C1116 427 1127 455 1131 485C1136 520 1131 560 1122 598C1115 630 1107 660 1100.500 687.800" fill="none" stroke="#f0000c" stroke-width="5"/>
<g font-size="17" fill="#777" font-weight="bold"><text x="925" y="316">З₄</text><text x="904" y="366">З₃</text><text x="904" y="395">З₂</text><text x="908" y="432">О</text><text x="993" y="436" fill="#999">А₄ З</text><text x="1080" y="443" fill="#999">А₃</text><text x="1046" y="456" fill="#999">А₃₁</text><text x="1029" y="528">Ф₃</text><text x="1049" y="541" fill="#999">А₅</text><text x="1052" y="686" fill="#999">Г₃</text><text x="1109" y="681" fill="#999">Л</text></g>
</svg>
<div id="slide" class="a">
<div class="t" id="stitle" style="left:41px;top:47px;font:bold 27.7px/32px 'Liberation Serif',serif;color:#000;white-space:pre">Воротник  «Шаль» и «Апаш»</div>
<div class="t" id="sbody" style="left:75px;top:199px;font:32.3px/39px 'Liberation Serif',serif;letter-spacing:-.2px;color:#000">9. Линию отлета<br>воротника<br>оформляем плавной<br>линией.</div>
</div>
<svg id="diagram" class="a" style="left:880px;top:290px" width="340" height="460" viewBox="880 290 340 460" font-family="'Liberation Sans',sans-serif">
<g fill="none" stroke="#b9b9b9" stroke-width="1.3">
<path d="M901 438.4H1072"/>
<path d="M910 453L1021 433.5"/>
<path d="M998.4 439C1002 487 1030 517 1068 523"/>
<path d="M1021.5 439L1100.5 687.8"/>
<path d="M1068.4 438.4L1068.6 520L1071.6 600"/>
<path d="M1072 438.4V733"/>
<path d="M894 687.8H1072"/>
<path d="M1100.5 687.8V731"/>
<path d="M894.3 571.5L904.2 574.7"/>
</g>
<path d="M1071.4 590L1072.2 688" stroke="#8a8a8a" stroke-width="1.2" fill="none"/>
<g fill="none" stroke="#000" stroke-width="2.4" stroke-linecap="round">
<path d="M954 319L927.6 398.4V438.6"/>
<path d="M927.6 438.8L996 437.4" stroke-width="3"/>
<path d="M927.6 398.4L996 437.4"/>
<path d="M927.6 398.4C952 404 985 414 996 437.4"/>
<path d="M939 368C985 381 1012 402 1021 437"/>
</g>
<path d="M944.4 345.6L1196.5 518.9L1100.5 687.8" fill="none" stroke="#4a7ebb" stroke-width="2.2" stroke-linejoin="miter"/>
<path d="M954 319C978 321 998 333 1022 347C1050 364 1085 397 1098 409C1116 427 1127 455 1131 485C1136 520 1131 560 1122 598C1115 630 1107 660 1100.5 687.8" fill="none" stroke="#f0000c" stroke-width="2.2"/>
<g fill="#1a1a1a" font-size="19">
<text x="925" y="316.5">З<tspan font-size="14" dy="4.5" dx="-1">4</tspan></text>
<text x="904.5" y="366.5">З<tspan font-size="14" dy="5.5" dx="-1">3</tspan></text>
<text x="904.5" y="395">З<tspan font-size="13" dy="4" dx="-1" font-family="'Liberation Serif',serif">2</tspan></text>
</g>
<g fill="#4d4d4d">
<text x="910" y="432" font-size="16.5" font-weight="bold" fill="#444">О</text>
<text x="993.5" y="436" font-size="13" fill="#666">А<tspan font-size="10" font-family="'Liberation Serif',serif" font-style="italic">4</tspan></text>
<text x="1023" y="435.6" font-size="14" font-weight="bold" fill="#555">3</text>
<text x="1080.5" y="443" font-size="13" fill="#666">А<tspan font-size="10" font-family="'Liberation Serif',serif">3</tspan></text>
<text x="1046.5" y="456" font-size="14.5" font-weight="bold" fill="#555">А<tspan font-size="11" font-weight="normal" font-family="'Liberation Serif',serif">31</tspan></text>
<text x="1029.5" y="528" font-size="15" font-weight="bold" fill="#555">Ф<tspan font-size="9" dy="3">3</tspan></text>
<text x="1049" y="539" font-size="13" fill="#555">А<tspan font-size="10.5" font-family="'Liberation Serif',serif">5</tspan></text>
<text x="1054" y="686" font-size="14" font-weight="bold" fill="#555">Г<tspan font-size="11.5">3</tspan></text>
<text x="1111" y="680.7" font-size="12" fill="#555">Л</text>
</g>
</svg>
<div class="a" style="left:1425px;top:142px;width:15px;height:604px;background:linear-gradient(90deg,#6b8fc4,#7d9fcf 3px,#7fa1d0 12px,#7394c8);border-left:1px solid #8fb0e0"></div>
<div class="a" style="left:1425px;top:746px;width:15px;height:50px;background:#a5c3f0;border-left:1px solid #8fb0e0"></div>
<div class="a" style="left:1426px;top:549px;width:13px;height:9px;border:1px solid #8796b0;border-radius:2px;background:linear-gradient(90deg,#f6f8fc,#d5dfee)"></div>
<svg class="a" style="left:1425px;top:142px" width="15" height="696" viewBox="0 0 15 696">
<path d="M3.500 10.500L8 5.500L12.500 10.500Z" fill="#4b5f86"/><path d="M3.500 593L8 598L12.500 593Z" fill="#4b5f86"/>
<g fill="#1b2234"><path d="M4.500 612.500L8 608.500L11.500 612.500ZM4.500 617L8 613L11.500 617Z"/><path d="M4.500 626.500L8 630.500L11.500 626.500ZM4.500 631L8 635L11.500 631Z"/></g>
<path d="M4 667.500L8 663L12 667.500Z" fill="#7188b4"/><path d="M4 684.500L8 689L12 684.500Z" fill="#7188b4"/>
</svg>
<div id="nsplit" class="a"></div>
<div id="notes" class="a"></div>
<div id="nscroll" class="a"></div>
<div id="status" class="a"></div>
<div id="statusr" class="a"></div>
<div class="ssep" style="left:93px"></div><div class="ssep" style="left:178px"></div><div class="ssep" style="left:282px"></div>
<div id="taskbar" class="a"></div>
<div class="tbtn" style="left:386px;width:58px"></div><div class="tbtn" style="left:448px;width:58px"></div><div class="tbtn" style="left:510px;width:58px"></div><div class="tbtn act" style="left:572px;width:58px"></div>
<div id="rainbow" class="a"></div>
<div class="t" style="left:8.8px;top:842.4px;line-height:14px;letter-spacing:-0.71px;">Слайд 36 из 51</div>
<div class="t" style="left:103.8px;top:842.4px;line-height:14px;letter-spacing:-0.38px;">"Тема Office"</div>
<div class="t" style="left:188.0px;top:842.4px;line-height:14px;letter-spacing:-0.59px;">Русский (Россия)</div>
<div class="t" style="left:1245.8px;top:842.4px;line-height:14px;letter-spacing:-1.11px;">86%</div>
<div class="t" style="left:1167.0px;top:871.5px;line-height:14px;letter-spacing:-0.82px;color:#fff;">RU</div>
<div class="t" style="left:1373.8px;top:866.3px;line-height:14px;letter-spacing:-0.76px;color:#fff;">15:21</div>
<div class="t" style="left:1359.8px;top:882.9px;line-height:14px;letter-spacing:-0.69px;color:#fff;">05.03.2025</div>
<div class="t" style="left:240.0px;top:808.0px;line-height:18px;font:16px 'Liberation Sans';line-height:18px;letter-spacing:-0.21px;color:#000;">Заметки к слайду</div>
<svg class="a" style="left:0;top:800px" width="1440" height="100" viewBox="0 800 1440 100">
<defs>
<linearGradient id="gvsel" x1="0" y1="0" x2="0" y2="1"><stop offset="0" stop-color="#fde6a8"/><stop offset=".4" stop-color="#fbcf72"/><stop offset="1" stop-color="#fddf95"/></linearGradient>
<linearGradient id="gvb" x1="0" y1="0" x2="0" y2="1"><stop offset="0" stop-color="#e3edfb"/><stop offset=".45" stop-color="#cfdff5"/><stop offset=".5" stop-color="#bcd2f0"/><stop offset="1" stop-color="#d8e6f9"/></linearGradient>
<radialGradient id="gzb" cx=".5" cy=".3" r=".8"><stop offset="0" stop-color="#fff"/><stop offset="1" stop-color="#c5d6ef"/></radialGradient>
<radialGradient id="gstart" cx=".5" cy=".75" r=".8"><stop offset="0" stop-color="#5fc0f2"/><stop offset=".5" stop-color="#2a6fb8"/><stop offset="1" stop-color="#153a70"/></radialGradient>
<linearGradient id="gstart2" x1="0" y1="0" x2="0" y2="1"><stop offset="0" stop-color="#fff" stop-opacity=".5"/><stop offset="1" stop-color="#fff" stop-opacity=".08"/></linearGradient>
<radialGradient id="gopera" cx=".5" cy=".3" r=".8"><stop offset="0" stop-color="#ff4b55"/><stop offset="1" stop-color="#c10b1c"/></radialGradient>
<linearGradient id="gfold" x1="0" y1="0" x2="0" y2="1"><stop offset="0" stop-color="#fbe7a2"/><stop offset="1" stop-color="#e9bf58"/></linearGradient>
<linearGradient id="gword" x1="0" y1="0" x2="1" y2="1"><stop offset="0" stop-color="#7fa6e6"/><stop offset="1" stop-color="#2450b0"/></linearGradient>
<linearGradient id="gppt" x1="0" y1="0" x2="1" y2="1"><stop offset="0" stop-color="#f7a070"/><stop offset="1" stop-color="#d9441c"/></linearGradient>
<linearGradient id="gie" x1="0" y1="0" x2="0" y2="1"><stop offset="0" stop-color="#1a86d8"/><stop offset=".45" stop-color="#5cc9f6"/><stop offset="1" stop-color="#1c8ee0"/></linearGradient>
<linearGradient id="gmp" x1="0" y1="0" x2="0" y2="1"><stop offset="0" stop-color="#9cc4e6"/><stop offset="1" stop-color="#4d86bd"/></linearGradient>
<radialGradient id="ghelp2" cx=".4" cy=".3" r=".8"><stop offset="0" stop-color="#4f7df0"/><stop offset="1" stop-color="#0a1fa0"/></radialGradient>
</defs>
<path d="M1429 809.500L1433 805L1437 809.500Z" fill="#6f87b5"/><path d="M1429 826.500L1433 831L1437 826.500Z" fill="#6f87b5"/>
<!-- view buttons -->
<rect x="1181.500" y="841" width="56" height="17" rx="2" fill="url(#gvb)" stroke="#9dbae1"/>
<path d="M1182 841.500h18v16h-18z" fill="url(#gvsel)" stroke="#e4a84a" stroke-width=".8"/><path d="M1218.700 841.500v16" stroke="#a9c2e6"/>
<g fill="none" stroke="#3b4660" stroke-width="1.100"><rect x="1186.500" y="845.500" width="10" height="8" fill="#fff"/><path d="M1189.500 845.500v8M1189.500 849.500h7"/>
<rect x="1205" y="845" width="3.500" height="3" fill="#fff"/><rect x="1210.500" y="845" width="3.500" height="3" fill="#fff"/><rect x="1205" y="850.500" width="3.500" height="3" fill="#fff"/><rect x="1210.500" y="850.500" width="3.500" height="3" fill="#fff"/>
<path d="M1223 845.500h10M1224.500 845.500v4.500h7v-4.500M1228 850v3.500M1225.500 854h5" /></g>
<!-- zoom slider -->
<path d="M1292 849.500h102" stroke="#7c9bcf" stroke-width="1"/><path d="M1292 850.500h102" stroke="#e8f0fc" stroke-width="1"/><path d="M1344.500 845.500v8" stroke="#e8f0fc" stroke-width="1.500"/>
<circle cx="1284.200" cy="849.200" r="7.300" fill="url(#gzb)" stroke="#6d83ad"/><path d="M1280.500 849.200h7.500" stroke="#48587c" stroke-width="1.800"/>
<circle cx="1401.900" cy="849.200" r="7.300" fill="url(#gzb)" stroke="#6d83ad"/><path d="M1398 849.200h7.800M1401.900 845.300v7.800" stroke="#48587c" stroke-width="1.800"/>
<path d="M1331.500 842.500h8v8.500l-4 4.500-4-4.500z" fill="#eef3fb" stroke="#6d7f9f" stroke-width=".9"/><path d="M1335.500 845v6" stroke="#b4c0d6"/>
<rect x="1419.500" y="841.500" width="14" height="14" rx="1.500" fill="#e4ecf8" stroke="#8da3c8"/>
<g stroke="#3b4660" stroke-width=".9"><path d="M1422 844l2.500 2.500M1431 844l-2.500 2.500M1422 853l2.500-2.500M1431 853l-2.500-2.500"/><path d="M1426.500 843.500v2M1426.500 851.500v2M1421.500 848.500h2M1429.500 848.500h2" stroke-dasharray="1 1"/></g>
<!-- start orb -->
<circle cx="27" cy="880" r="19" fill="url(#gstart)" stroke="#10284e" stroke-width="1.200"/>
<path d="M9 877a18 18 0 0 1 36 0q-18 6-36 0z" fill="url(#gstart2)"/>
<g><path d="M16.500 870.500q5.500-3 10.300-.4l-1.600 8.500q-5.200-2.400-10.300.4z" fill="#e8602c"/><path d="M28.300 870.700q5 2.700 10.500 0l-1.600 8.400q-5.300 2.700-10.500 0z" fill="#7cc142"/><path d="M14.500 881q5.300-2.800 10.400-.4l-1.600 8.500q-5.200-2.400-10.400.4z" fill="#3c9ae0"/><path d="M26.400 881.300q5.200 2.700 10.500 0l-1.600 8.400q-5.300 2.700-10.500 0z" fill="#fbc52c"/></g>
<!-- grip dots -->
<g fill="#4d535c"><path d="M58.500 865h1v1h-1zM61.500 865h1v1h-1zM64.500 865h1v1h-1zM58.500 868h1v1h-1zM61.500 868h1v1h-1zM64.500 868h1v1h-1zM58.500 871h1v1h-1zM61.500 871h1v1h-1zM64.500 871h1v1h-1zM58.500 874h1v1h-1zM61.500 874h1v1h-1zM64.500 874h1v1h-1zM58.500 877h1v1h-1zM61.500 877h1v1h-1zM64.500 877h1v1h-1zM58.500 880h1v1h-1zM61.500 880h1v1h-1zM64.500 880h1v1h-1zM58.500 883h1v1h-1zM61.500 883h1v1h-1zM64.500 883h1v1h-1zM58.500 886h1v1h-1zM61.500 886h1v1h-1zM64.500 886h1v1h-1zM58.500 889h1v1h-1zM61.500 889h1v1h-1zM64.500 889h1v1h-1zM58.500 892h1v1h-1zM61.500 892h1v1h-1zM64.500 892h1v1h-1z"/></g>
<!-- opera -->
<path fill-rule="evenodd" d="M105 865c8.500 0 15.200 6.300 15.200 14.300s-6.700 14.400-15.200 14.400-15.200-6.400-15.200-14.400S96.500 865 105 865zm0 3.500c-4 0-6.500 4.800-6.500 10.800s2.500 10.900 6.500 10.900 6.500-4.900 6.500-10.900-2.500-10.800-6.500-10.800z" fill="url(#gopera)"/>
<!-- IE -->
<ellipse cx="167" cy="879" rx="19" ry="7" fill="none" stroke="#f5c518" stroke-width="2.800" transform="rotate(-40 167 879)"/>
<text x="153.800" y="893.500" font-family="'Liberation Sans',sans-serif" font-weight="bold" font-size="51" fill="url(#gie)">e</text>
<ellipse cx="167" cy="879" rx="19" ry="7" fill="none" stroke="#f5c518" stroke-width="2.800" transform="rotate(-40 167 879)" stroke-dasharray="50 42" stroke-dashoffset="4"/>
<!-- media player -->
<path d="M215.500 870l22-1.500v25l-22-1.500z" fill="url(#gmp)" stroke="#3a6a9c" stroke-width=".8"/><path d="M237.500 868.500l2 .5v24l-2 .5zM239.500 869.500l1.800.5v22l-1.800.5z" fill="#7aa7d2" stroke="#4f7fb0" stroke-width=".5"/>
<circle cx="226" cy="881" r="8.300" fill="#f28a1e" stroke="#fbd7ae" stroke-width="1"/><path d="M223 876l8 5-8 5z" fill="#fff"/>
<!-- yandex -->
<circle cx="291" cy="880" r="16" fill="#fff"/><path d="M283.500 871.500l7.500 9.500v10.500M298.500 871.500l-7.500 9.500" fill="none" stroke="#f22a1e" stroke-width="3.300" stroke-linecap="round"/>
<!-- rainbow ring -->
<circle cx="352.500" cy="880" r="5" fill="#fff"/>
<!-- explorer -->
<path d="M400.500 871.500q0-2 2-2h8l2 2h14q2 0 2 2v17h-28z" fill="url(#gfold)" stroke="#b88f2e" stroke-width=".8"/>
<path d="M401 874.500h27.500v16h-27.500z" fill="#f6dc8a" opacity=".8"/>
<rect x="403.500" y="868" width="3" height="2" fill="#3aa845"/><rect x="411.500" y="869.500" width="3" height="2" fill="#d8382c"/><rect x="419.500" y="871" width="3" height="2" fill="#2f7fd6"/>
<path d="M404.500 884.500h21v3h-3.500v6.500h-4.500v-5h-5v5h-4.500v-6.500h-3.500z" fill="#6fc0ea" stroke="#2a78b0" stroke-width=".8"/>
<!-- chrome -->
<circle cx="476.800" cy="880" r="15" fill="#fbc116"/>
<path d="M476.800 880L463.800 872.500A15 15 0 0 1 489.800 872.500z" fill="#e33b2e"/><path d="M463.800 872.500A15 15 0 0 1 489.800 872.500H476.800z" fill="#e33b2e"/>
<path d="M476.800 880L469.300 893A15 15 0 0 1 463.800 872.500z" fill="#2da94f"/>
<circle cx="476.800" cy="880" r="7" fill="#fff"/><circle cx="476.800" cy="880" r="5.500" fill="#4a8af4"/>
<!-- word -->
<path d="M524.500 868q6-4.500 14-4l-1.500 27q-7 0-12.500 3z" fill="url(#gword)"/>
<path d="M531.500 869.500l22.500 1.500-1.500 23-22.500-2.500z" fill="#f4f7fc" stroke="#9fb4d8" stroke-width=".8"/>
<text x="534" y="880" font-family="'Liberation Sans',sans-serif" font-weight="bold" font-style="italic" font-size="9.500" fill="#2450b0" transform="rotate(4 534 880)">W</text>
<path d="M545.500 873.500l6 .5M545.500 876.500l6 .5M545 879.500l6 .5M534 883.500l17 1.500M534 886.500l17 1.500M534 889.500l17 1.500" stroke="#2f5cc0" stroke-width="1.300"/>
<!-- ppt -->
<path d="M586.500 868q6-4.500 15-4l-.5 26q-8 0-14.500 3.500z" fill="url(#gppt)"/>
<path d="M592.500 870.500l23 1.500-1.500 21.500-22.500-2.500z" fill="#f9ede6" stroke="#e8a486" stroke-width=".8"/>
<rect x="595" y="875" width="17" height="13" rx="1" fill="#e5572a" transform="rotate(4 603 881)"/>
<circle cx="607.500" cy="881.500" r="3.500" fill="#fbe3d8"/><path d="M607.500 881.500v-3.500a3.500 3.500 0 0 1 3.500 3.500z" fill="#e5572a"/><path d="M597 879.500h5M597 882h5M597 884.500h5" stroke="#fbe3d8" stroke-width="1.200"/>
<!-- tray -->
<g fill="#4d535c"><path d="M1150.500 865h1v1h-1zM1153.500 865h1v1h-1zM1156.500 865h1v1h-1zM1150.500 868h1v1h-1zM1153.500 868h1v1h-1zM1156.500 868h1v1h-1zM1150.500 871h1v1h-1zM1153.500 871h1v1h-1zM1156.500 871h1v1h-1zM1150.500 874h1v1h-1zM1153.500 874h1v1h-1zM1156.500 874h1v1h-1zM1150.500 877h1v1h-1zM1153.500 877h1v1h-1zM1156.500 877h1v1h-1zM1150.500 880h1v1h-1zM1153.500 880h1v1h-1zM1156.500 880h1v1h-1zM1150.500 883h1v1h-1zM1153.500 883h1v1h-1zM1156.500 883h1v1h-1zM1150.500 886h1v1h-1zM1153.500 886h1v1h-1zM1156.500 886h1v1h-1zM1150.500 889h1v1h-1zM1153.500 889h1v1h-1zM1156.500 889h1v1h-1zM1150.500 892h1v1h-1zM1153.500 892h1v1h-1zM1156.500 892h1v1h-1z"/></g>
<circle cx="1197.300" cy="878.100" r="7.500" fill="#d8dde6"/><circle cx="1197.300" cy="878.100" r="6.300" fill="url(#ghelp2)"/>
<text x="1194.200" y="882.300" font-family="'Liberation Sans',sans-serif" font-weight="bold" font-size="11" fill="#fff">?</text>
<g fill="none" stroke="#fff" stroke-width="1.100"><rect x="1217.500" y="870.500" width="6" height="3.500"/><path d="M1215.500 873v3.500h6v-2" /></g>
<path d="M1216.500 882h5l-2.500 2.800z" fill="#fff"/><path d="M1233.500 883.500h8l-4-4.500z" fill="#fff"/>
<circle cx="1261.500" cy="876" r="4.300" fill="none" stroke="#1e90e6" stroke-width="2.600"/><path d="M1261.500 879v8.500" stroke="#1e90e6" stroke-width="2.500"/><path d="M1261.500 885.500h2.500" stroke="#1e90e6" stroke-width="1.500"/>
<path d="M1278.500 876.500h3l4.500-4.500v14l-4.500-4.500h-3z" fill="#f2f2f2"/><path d="M1287.500 875q2 4 0 8" stroke="#cfcfcf" fill="none"/>
<circle cx="1289.500" cy="884.500" r="4" fill="#e0201c"/><circle cx="1289.500" cy="884.500" r="2.300" fill="none" stroke="#fff" stroke-width="1"/><path d="M1287.900 886.100l3.200-3.200" stroke="#fff" stroke-width="1"/>
<g fill="#fff"><rect x="1303" y="884" width="2" height="2.500"/><rect x="1306" y="882" width="2" height="4.500"/><rect x="1309" y="879.500" width="2" height="7"/><rect x="1312" y="877" width="2" height="9.500"/><rect x="1315" y="874.500" width="2" height="12" fill="#6d7178"/></g>
<path d="M1328 874v14" stroke="#fff" stroke-width="1.300"/><path d="M1329 875q3-2 5.500 0t5.500 0v6.500q-3 2-5.500 0t-5.500 0z" fill="#fff"/>
<path d="M1337.500 879.500l5 9h-10z" fill="#f5cf1b" stroke="#a88a08" stroke-width=".6"/><path d="M1337.500 882.500v3.200M1337.500 886.500v1" stroke="#222" stroke-width="1.100"/>
<rect x="1426.500" y="862.500" width="14" height="36" fill="#1a1d22" stroke="#7b8088"/>
</svg>
</body></html>
